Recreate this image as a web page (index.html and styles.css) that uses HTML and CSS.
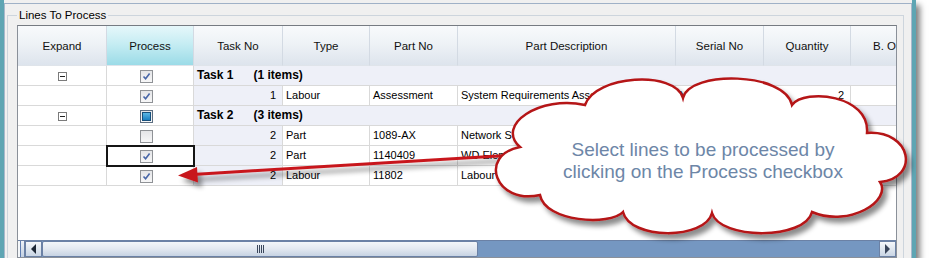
FILE: index.html
```html
<!DOCTYPE html>
<html lang="en">
<head>
    <meta charset="UTF-8">
    <title>Lines To Process</title>
    <link rel="stylesheet" href="styles.css">
</head>
<body>
    <div class="window">
        <div class="pane">
            <fieldset class="group">
                <legend>Lines To Process</legend>
                <div class="grid">
                    <div class="grid-body">
                        <table class="lines">
                            <colgroup>
                                <col class="w89"><col class="w87"><col class="w89"><col class="w87"><col class="w88">
                                <col class="w218"><col class="w88"><col class="w87"><col class="w68">
                            </colgroup>
                            <thead>
                                <tr>
                                    <th>Expand</th>
                                    <th class="active">Process</th>
                                    <th>Task No</th>
                                    <th>Type</th>
                                    <th>Part No</th>
                                    <th>Part Description</th>
                                    <th>Serial No</th>
                                    <th>Quantity</th>
                                    <th>B. O</th>
                                </tr>
                            </thead>
                            <tbody>
                                <tr>
                                    <td class="center"><span class="expander"></span></td>
                                    <td class="process"><span class="check checked"><svg viewBox="0 0 11 11"><path d="M2.5 5.5 L4.6 7.8 L8.6 2.6"/></svg></span></td>
                                    <td class="group-cell" colspan="7"><span class="task-name">Task 1</span>(1 items)</td>
                                </tr>
                                <tr>
                                    <td></td>
                                    <td class="process"><span class="check checked"><svg viewBox="0 0 11 11"><path d="M2.5 5.5 L4.6 7.8 L8.6 2.6"/></svg></span></td>
                                    <td class="num task">1</td>
                                    <td>Labour</td>
                                    <td>Assessment</td>
                                    <td>System Requirements Assessment</td>
                                    <td>N/A</td>
                                    <td class="num">2</td>
                                    <td></td>
                                </tr>
                                <tr>
                                    <td class="center"><span class="expander"></span></td>
                                    <td class="process"><span class="check partial"><span class="fill"></span></span></td>
                                    <td class="group-cell" colspan="7"><span class="task-name">Task 2</span>(3 items)</td>
                                </tr>
                                <tr>
                                    <td></td>
                                    <td class="process"><span class="check"></span></td>
                                    <td class="num task">2</td>
                                    <td>Part</td>
                                    <td>1089-AX</td>
                                    <td>Network S</td>
                                    <td></td>
                                    <td></td>
                                    <td></td>
                                </tr>
                                <tr>
                                    <td></td>
                                    <td class="process focused"><span class="check checked"><svg viewBox="0 0 11 11"><path d="M2.5 5.5 L4.6 7.8 L8.6 2.6"/></svg></span></td>
                                    <td class="num task">2</td>
                                    <td>Part</td>
                                    <td>1140409</td>
                                    <td>WD Eleme</td>
                                    <td></td>
                                    <td></td>
                                    <td></td>
                                </tr>
                                <tr>
                                    <td></td>
                                    <td class="process"><span class="check checked"><svg viewBox="0 0 11 11"><path d="M2.5 5.5 L4.6 7.8 L8.6 2.6"/></svg></span></td>
                                    <td class="num task">2</td>
                                    <td>Labour</td>
                                    <td>11802</td>
                                    <td>Labour</td>
                                    <td></td>
                                    <td></td>
                                    <td></td>
                                </tr>
                            </tbody>
                        </table>
                    </div>
                    <div class="hscroll">
                        <span class="sb-grip"></span>
                        <span class="sb-btn sb-left"></span>
                        <span class="sb-thumb"><span class="sb-lines"></span></span>
                        <span class="sb-track"></span>
                        <span class="sb-btn sb-right"></span>
                    </div>
                </div>
            </fieldset>
        </div>
    </div>

    <!-- callout drawn over the grid -->
    <svg class="annotation" width="930" height="275" viewBox="0 0 930 275">
        <defs>
            <filter id="shadow" x="-10%" y="-20%" width="130%" height="150%">
                <feDropShadow dx="4" dy="5" stdDeviation="2.5" flood-color="#000" flood-opacity="0.45"/>
            </filter>
        </defs>
        <g filter="url(#shadow)">
            <line x1="600" y1="149.7" x2="193" y2="174.5" stroke="#c8171c" stroke-width="3"/>
            <polygon points="178,175.5 197,167 198,182.5" fill="#c8171c"/>
        </g>
        <path class="cloud" filter="url(#shadow)"
              d="M585,105 C595,75 675,70 683,98 C690,70 785,72 792,105 C805,88 870,95 867,133 C912,130 920,178 880,182 C892,200 850,228 812,212 C805,240 720,240 712,213 C705,240 630,240 623,212 C610,226 545,222 540,195 C495,205 478,155 520,147 C495,125 540,95 585,105 Z"/>
    </svg>
    <div class="callout-text">Select lines to be processed by<br>clicking on the Process checkbox</div>
</body>
</html>
```

FILE: styles.css
```css
body {
    margin: 0;
    background: #fff;
    font-family: "Liberation Sans", Arial, sans-serif;
    font-size: 11px;
    color: #000;
}
.window {
    width: 908px;
    height: 255px;
    padding-top: 3px;
    border-left: 4px solid #5ea5b3;
    border-right: 4px solid #5ea5b3;
    background: #f0f0f0;
    box-shadow: 4px 5px 6px rgba(0, 0, 0, 0.5);
    overflow: hidden;
}
.pane {
    height: 254px;
    padding: 4px 7px 0 2px;
    border-top: 1px solid #9fb1c7;
    border-left: 1px solid #a9b8cb;
    border-right: 1px solid #a9b8cb;
}
.group {
    margin: 0;
    min-width: 0;
    padding: 3px 6px 0 9px;
    border: 1px solid #cdd5dd;
}
.group legend {
    padding: 0 2px;
    line-height: 14px;
    font-size: 11.5px;
}
.grid {
    width: 880px;
    height: 233px;
    box-sizing: border-box;
    border: 1px solid #8a9099;
    border-top-color: #767b82;
    background: #fff;
    display: flex;
    flex-direction: column;
}
.grid-body {
    flex: 1;
    overflow: hidden;
}
.lines {
    width: 901px;
    table-layout: fixed;
    border-collapse: separate;
    border-spacing: 0;
}
.w89 { width: 89px; }
.w87 { width: 87px; }
.w88 { width: 88px; }
.w68 { width: 68px; }
.w218 { width: 218px; }
.lines th,
.lines td {
    box-sizing: border-box;
    padding: 0 3px;
    border-right: 1px solid #d9d9d9;
    border-bottom: 1px solid #d9d9d9;
    white-space: nowrap;
    overflow: hidden;
}
.lines th {
    height: 40px;
    font-weight: normal;
    font-size: 11.5px;
    color: #111;
    background: linear-gradient(#f8fafc 0%, #eef2f6 45%, #dde4ed 100%);
    border-right-color: #d3dae3;
    border-bottom-color: #dfe4ea;
}
.lines th.active {
    background: linear-gradient(#e6f7fa 0%, #c6edf3 45%, #9bdbe7 100%);
}
.lines td {
    height: 20px;
    line-height: 19px;
}
.center {
    text-align: center;
}
.num {
    text-align: right;
    padding-right: 6px !important;
}
.task {
    background: #eef0f8;
}
.group-cell {
    background: #eef0f8;
    font-weight: bold;
    font-size: 12px;
    border-right: none !important;
}
.task-name {
    display: inline-block;
    margin-right: 20px;
}
.process {
    text-align: center;
    padding-right: 10px !important;
}
.process.focused {
    outline: 2px solid #151515;
    outline-offset: -1px;
}
.expander {
    display: inline-block;
    position: relative;
    width: 9px;
    height: 9px;
    box-sizing: border-box;
    border: 1px solid #7b7b7b;
    background: #fff;
    vertical-align: middle;
}
.expander::after {
    content: "";
    position: absolute;
    left: 1px;
    top: 3px;
    width: 5px;
    height: 1px;
    background: #222;
}
.check {
    display: inline-block;
    width: 13px;
    height: 13px;
    box-sizing: border-box;
    border: 1px solid #8f9296;
    background: linear-gradient(#e4e5e7, #f7f7f8);
    vertical-align: middle;
}
.check svg {
    display: block;
    width: 11px;
    height: 11px;
}
.check path {
    fill: none;
    stroke: #4766a8;
    stroke-width: 1.6;
}
.check.partial {
    padding: 1px;
    border-color: #5c6d80;
}
.check .fill {
    display: block;
    width: 9px;
    height: 9px;
    box-sizing: border-box;
    border: 1px solid #17507c;
    background: linear-gradient(#5cb8e6, #1a7fc0);
}
.hscroll {
    display: flex;
    height: 17px;
    box-sizing: border-box;
    border-top: 1px solid #6b81a5;
    background: #7597c1;
}
.sb-grip {
    width: 6px;
    background: linear-gradient(#eef2f7, #c3d0e1);
    box-shadow: inset 2px 0 0 #f4f7fa, inset 3px 0 0 #5f7db0;
    border-right: 1px solid #6b81a5;
}
.sb-btn {
    width: 17px;
    box-sizing: border-box;
    border: 1px solid #6b81a5;
    background: linear-gradient(#f4f7fa, #c9d5e4);
    display: flex;
    align-items: center;
    justify-content: center;
}
.sb-left::before {
    content: "";
    border-top: 5px solid transparent;
    border-bottom: 5px solid transparent;
    border-right: 5px solid #1d2736;
}
.sb-right::before {
    content: "";
    border-top: 5px solid transparent;
    border-bottom: 5px solid transparent;
    border-left: 5px solid #38445a;
}
.sb-thumb {
    width: 436px;
    box-sizing: border-box;
    border: 1px solid #6b81a5;
    border-radius: 2px;
    background: linear-gradient(#f3f6f9 0%, #e2e8f0 50%, #c7d3e3 100%);
    display: flex;
    align-items: center;
    justify-content: center;
}
.sb-lines {
    width: 7px;
    height: 8px;
    background: repeating-linear-gradient(90deg, #3a475c 0 1px, transparent 1px 2px);
}
.sb-track {
    flex: 1;
}
.annotation {
    position: absolute;
    top: 0;
    left: 0;
}
.cloud {
    fill: #fff;
    stroke: #b51419;
    stroke-width: 2.5;
}
.callout-text {
    position: absolute;
    left: 498px;
    top: 139px;
    width: 410px;
    text-align: center;
    font-size: 19px;
    line-height: 22px;
    color: #6d86a7;
}
```
